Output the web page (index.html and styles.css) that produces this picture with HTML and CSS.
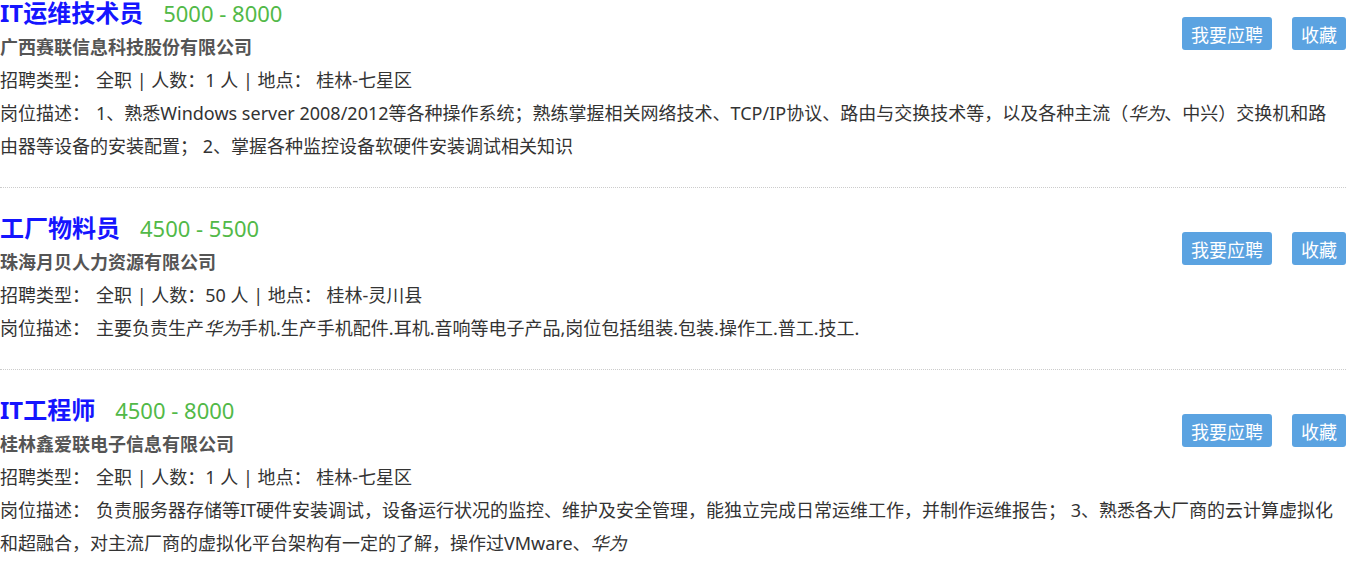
FILE: index.html
```html
<!DOCTYPE html>
<html lang="zh-CN">
<head>
  <meta charset="UTF-8" />
  <meta name="viewport" content="width=device-width, initial-scale=1" />
  <title>招聘信息</title>
  <link rel="stylesheet" href="styles.css">
</head>
<body>
  <ul class="job-list">
    <li class="job">
      <div class="job-actions">
        <button class="btn">我要应聘</button>
        <button class="btn">收藏</button>
      </div>
      <h3 class="job-title"><a href="#">IT运维技术员</a><span class="salary">5000 - 8000</span></h3>
      <p class="company">广西赛联信息科技股份有限公司</p>
      <p class="meta"><span class="label">招聘类型：</span>全职 | 人数：1 人 | 地点： 桂林-七星区</p>
      <p class="desc"><span class="label">岗位描述：</span>1、熟悉Windows server 2008/2012等各种操作系统；熟练掌握相关网络技术、TCP/IP协议、路由与交换技术等，以及各种主流（<em>华为</em>、中兴）交换机和路由器等设备的安装配置； 2、掌握各种监控设备软硬件安装调试相关知识</p>
    </li>
    <li class="job">
      <div class="job-actions">
        <button class="btn">我要应聘</button>
        <button class="btn">收藏</button>
      </div>
      <h3 class="job-title"><a href="#">工厂物料员</a><span class="salary">4500 - 5500</span></h3>
      <p class="company">珠海月贝人力资源有限公司</p>
      <p class="meta"><span class="label">招聘类型：</span>全职 | 人数：50 人 | 地点： 桂林-灵川县</p>
      <p class="desc"><span class="label">岗位描述：</span>主要负责生产<em>华为</em>手机.生产手机配件.耳机.音响等电子产品,岗位包括组装.包装.操作工.普工.技工.</p>
    </li>
    <li class="job">
      <div class="job-actions">
        <button class="btn">我要应聘</button>
        <button class="btn">收藏</button>
      </div>
      <h3 class="job-title"><a href="#">IT工程师</a><span class="salary">4500 - 8000</span></h3>
      <p class="company">桂林鑫爱联电子信息有限公司</p>
      <p class="meta"><span class="label">招聘类型：</span>全职 | 人数：1 人 | 地点： 桂林-七星区</p>
      <p class="desc"><span class="label">岗位描述：</span>负责服务器存储等IT硬件安装调试，设备运行状况的监控、维护及安全管理，能独立完成日常运维工作，并制作运维报告； 3、熟悉各大厂商的云计算虚拟化和超融合，对主流厂商的虚拟化平台架构有一定的了解，操作过VMware、<em>华为</em></p>
    </li>
  </ul>
</body>
</html>
```

FILE: styles.css
```css
body {
  margin: 0;
  padding: 0;
  background: #fff;
  color: #333;
  font-family: "Noto Sans", "Noto Sans CJK SC", sans-serif;
  font-size: 18px;
}
.job-list {
  list-style: none;
  margin: 0;
  padding: 0 5px 0 0;
}
.job {
  padding: 0 0 24px;
  border-bottom: 1px dotted #ccc;
}
.job::after {
  content: "";
  display: block;
  clear: both;
}
.job + .job {
  padding-top: 27px;
}
.job-title {
  margin: 0 0 5px;
  font-size: 24px;
  line-height: 25px;
  font-weight: bold;
}
.job-title a {
  color: #1515ff;
  text-decoration: none;
}
.salary {
  margin-left: 20px;
  color: #52b948;
  font-size: 22px;
  font-weight: normal;
}
.company,
.meta,
.desc {
  margin: 0;
  line-height: 33px;
}
.company {
  color: #555;
  font-weight: bold;
}
.desc {
  padding-right: 7px;
}
.label {
  margin-right: 6px;
}
.desc em {
  font-style: italic;
}
.job-actions {
  float: right;
  display: flex;
  gap: 20px;
  margin-top: 17px;
}
.btn {
  background: #5ba3e1;
  color: #fff;
  border: none;
  border-radius: 3px;
  height: 33px;
  padding: 0 9px;
  font-family: "Noto Sans CJK SC", sans-serif;
  font-size: 18px;
  cursor: pointer;
}
```
